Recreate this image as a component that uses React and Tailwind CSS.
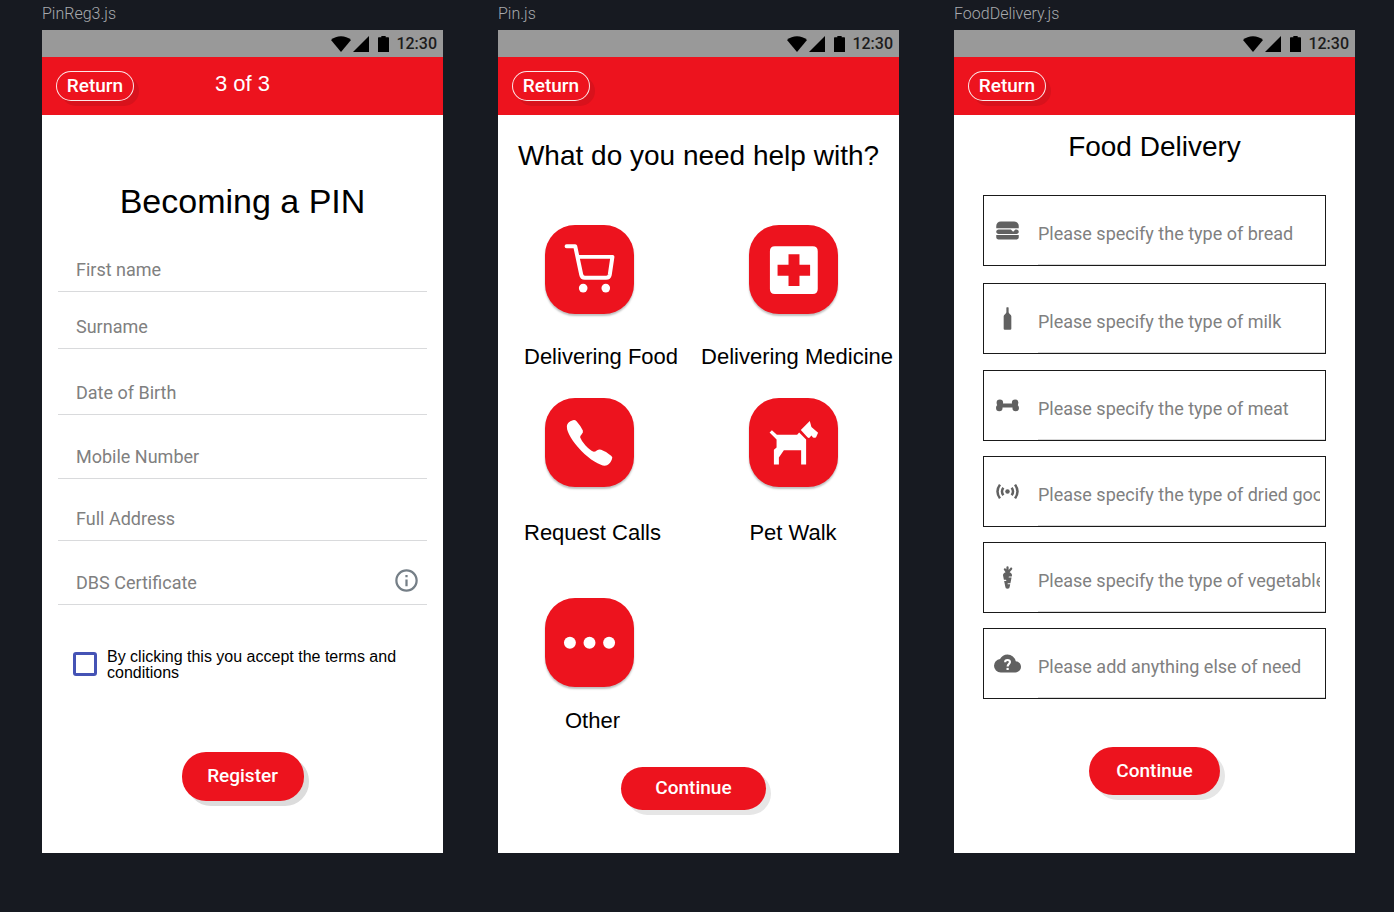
import React from "react";

const roboto = "font-[Roboto,sans-serif]";
const placeholder = "text-[18px] text-[#333] placeholder:text-[#808080] placeholder:opacity-100 outline-none";

function StatusBar() {
  return (
    <div className="flex h-[27px] items-center justify-end bg-[#999] pr-[6px]">
      <svg className="mr-[2px] h-4 w-5" viewBox="0 0 60 48" aria-hidden="true">
        <path d="M0 12Q13 1 30 1T60 12L30 48Z" />
      </svg>
      <svg className="mr-[9px] h-4 w-4" viewBox="0 0 48 48" aria-hidden="true">
        <path d="M48 0V48H0Z" />
      </svg>
      <svg className="mr-[7px] h-4 w-[11px]" viewBox="0 0 33 48" aria-hidden="true">
        <path d="M10 0H23V4H31Q33 4 33 7V48H0V7Q0 4 2 4H10Z" />
      </svg>
      <span className="text-base leading-4 font-medium text-[#1c1c1c]">12:30</span>
    </div>
  );
}

function Phone({ name, progress, children }) {
  return (
    <section className={`min-w-0 ${roboto}`}>
      <h2 className="mb-[6px] text-base leading-5 font-light text-[#a8aaae]">{name}</h2>
      <div className="bg-white">
        <StatusBar />
        <header className="grid h-[58px] grid-cols-3 items-center bg-[#ed131e] px-[14px] text-white">
          <button className="h-[30px] w-[78px] rounded-[15px] border border-white/90 bg-[#ed131e] text-[19px] leading-7 font-medium shadow-[5px_5px_0_#d8121c]">
            Return
          </button>
          <span className="pb-1 text-center font-['Liberation_Sans',sans-serif] text-[22px] leading-8">{progress}</span>
        </header>
        {children}
      </div>
    </section>
  );
}

function ActionButton({ className, children }) {
  return (
    <button className={`block rounded-[24px] bg-[#ed131e] text-center text-[19px] leading-6 font-medium text-white ${className}`}>
      {children}
    </button>
  );
}

const heading = "text-center font-['Liberation_Sans',sans-serif] leading-10 whitespace-nowrap text-black";

const regFields = [
  { id: "first-name", label: "First name", gap: "" },
  { id: "surname", label: "Surname", gap: "mt-[15px]" },
  { id: "birth", label: "Date of Birth", gap: "mt-6" },
  { id: "mobile", label: "Mobile Number", gap: "mt-[22px]" },
  { id: "address", label: "Full Address", gap: "mt-5" },
  { id: "dbs", label: "DBS Certificate", gap: "mt-[22px]", info: true },
];

function Register() {
  return (
    <form className="px-4 pt-[66px] pb-[52px]" onSubmit={(e) => e.preventDefault()}>
      <h1 className={`${heading} mb-[29px] text-[34px]`}>Becoming a PIN</h1>
      {regFields.map((f) => (
        <div key={f.id} className={`flex h-[42px] items-center border-b border-[#d9dadc] ${f.gap}`}>
          <input id={f.id} aria-label={f.label} placeholder={f.label} className={`h-full min-w-0 flex-1 pb-[2px] pl-[18px] ${placeholder}`} />
          {f.info && (
            <button type="button" aria-label="About the DBS certificate" className="mr-[7px] mb-[6px] text-[#757f87]">
              <svg className="h-[27px] w-[27px]" viewBox="0 0 24 24" fill="currentColor">
                <path d="M11 9h2V7h-2m1 13c-4.41 0-8-3.59-8-8s3.59-8 8-8 8 3.59 8 8-3.59 8-8 8m0-18A10 10 0 0 0 2 12a10 10 0 0 0 10 10 10 10 0 0 0 10-10A10 10 0 0 0 12 2m-1 15h2v-6h-2v6z" />
              </svg>
            </button>
          )}
        </div>
      ))}
      <div className="mt-[44px] flex items-start pl-[15px]">
        <input
          id="terms"
          type="checkbox"
          className="mt-[3px] mr-[10px] h-6 w-6 shrink-0 appearance-none rounded-[3px] border-[3px] border-[#4553b5] bg-white checked:bg-[#4553b5]"
        />
        <label htmlFor="terms" className="font-['Liberation_Sans',sans-serif] text-base leading-4 text-black">
          By clicking this you accept the terms and conditions
        </label>
      </div>
      <ActionButton className="mx-auto mt-[71px] h-[49px] w-[122px] pb-[2px] shadow-[5px_5px_0_#dcdcdc]">Register</ActionButton>
    </form>
  );
}

function Tile({ label, children, className = "" }) {
  return (
    <button
      aria-label={label}
      className={`block h-[89px] w-[89px] rounded-[30px] bg-[#ed131e] text-white shadow-[0_2px_2px_rgba(0,0,0,0.25)] ${className}`}
    >
      <svg viewBox="0 0 268 268" className="h-full w-full" fill="currentColor">
        {children}
      </svg>
    </button>
  );
}

const tileLabel = "font-['Liberation_Sans',sans-serif] text-[22px] leading-8 whitespace-nowrap text-black";

function Help() {
  return (
    <div className="pt-[21px] pb-[43px]">
      <h1 className={`${heading} mb-[49px] text-[28px]`}>What do you need help with?</h1>
      <div className="flex justify-between pr-[6px] pl-[26px]">
        <div>
          <Tile label="Delivering Food" className="ml-[21px]">
            <path
              d="M65 64H91L109 149Q111 159 120 159H184Q193 159 195 150L203 96H98"
              fill="none"
              stroke="currentColor"
              strokeWidth="12"
              strokeLinecap="round"
              strokeLinejoin="round"
            />
            <circle cx="115" cy="190" r="13" />
            <circle cx="183" cy="190" r="13" />
          </Tile>
          <p className={`${tileLabel} mt-[27px] mb-[25px]`}>Delivering Food</p>
          <Tile label="Request Calls" className="ml-[21px]">
            <path d="M66 88C65 78 73 70 84 67Q90 65 95 70Q106 82 114 98Q116 104 110 110Q105 115 106 119Q110 130 122 143Q136 158 147 162Q151 162 157 157Q163 154 169 156Q185 161 200 175Q205 179 201 186C196 197 190 203 180 204C166 204 135 186 109 159C83 131 66 104 66 88Z" />
          </Tile>
          <p className={`${tileLabel} mt-[30px] mb-[49px]`}>Request Calls</p>
          <Tile label="Other" className="ml-[21px]">
            <circle cx="75" cy="135" r="18" />
            <circle cx="134" cy="135" r="18" />
            <circle cx="193" cy="135" r="18" />
          </Tile>
          <p className={`${tileLabel} mt-[18px] ml-[41px]`}>Other</p>
        </div>
        <div className="flex flex-col items-center">
          <Tile label="Delivering Medicine">
            <path
              fillRule="evenodd"
              d="M78 64H192Q207 64 207 79V193Q207 208 192 208H78Q63 208 63 193V79Q63 64 78 64ZM119 88V120H86V153H119V184H152V153H184V120H152V88Z"
            />
          </Tile>
          <p className={`${tileLabel} mt-[27px] mb-[25px] pl-2`}>Delivering Medicine</p>
          <Tile label="Pet Walk">
            <path d="M62 104L69 97L84 111H145L151 104L172 125V200H157V157H105L90 179V200H75V156L83 149V125Z" />
            <path d="M156 96L183 69L188 87L208 105L202 118Q197 122 192 118L188 113L182 120Q179 121 176 118Z" />
          </Tile>
          <p className={`${tileLabel} mt-[30px]`}>Pet Walk</p>
        </div>
      </div>
      <div className="flex justify-center pr-[10px]">
        <ActionButton className="mt-[30px] h-[43px] w-[145px] pb-[2px] shadow-[5px_5px_0_#e6e6e6]">Continue</ActionButton>
      </div>
    </div>
  );
}

const foods = [
  {
    id: "bread",
    text: "Please specify the type of bread",
    gap: "",
    icon: (
      <path d="M2 16H22V18C22 19.11 21.11 20 20 20H4C2.89 20 2 19.11 2 18V16M6 4H18C20.22 4 22 5.78 22 8V10H2V8C2 5.78 3.78 4 6 4M4 11H15L17 13L19 11H20C21.11 11 22 11.89 22 13C22 14.11 21.11 15 20 15H4C2.89 15 2 14.11 2 13C2 11.89 2.89 11 4 11Z" />
    ),
  },
  {
    id: "milk",
    text: "Please specify the type of milk",
    gap: "mt-[17px]",
    icon: <path d="M11 2.5Q11 2 11.5 2H12.5Q13 2 13 2.5V6.5Q13.200 7.500 14.200 8.200Q15.400 9 15.400 10V21Q15.400 22 14.400 22H9.600Q8.600 22 8.600 21V10Q8.600 9 9.800 8.200Q10.800 7.500 11 6.500Z" />,
  },
  {
    id: "meat",
    text: "Please specify the type of meat",
    gap: "mt-4",
    icon: (
      <>
        <circle cx="5.200" cy="9.500" r="2.900" />
        <circle cx="4.700" cy="14.200" r="2.900" />
        <circle cx="18.800" cy="9.500" r="2.900" />
        <circle cx="19.300" cy="14.200" r="2.900" />
        <path d="M3 8.500L7.500 10.200H16.500L21 8.500V15.500L16.500 13.800H7.500L3 15.500Z" />
      </>
    ),
  },
  {
    id: "dried",
    text: "Please specify the type of dried goods",
    gap: "mt-[15px]",
    icon: (
      <>
        <circle cx="12" cy="12" r="2" />
        <path
          d="M5.300 5.900Q.900 12 5.300 18.100M18.700 5.900Q23.100 12 18.700 18.100M8.300 8.700Q5.900 12 8.300 15.300M15.700 8.700Q18.100 12 15.700 15.300"
          fill="none"
          stroke="currentColor"
          strokeWidth="2.200"
        />
      </>
    ),
  },
  {
    id: "vegetables",
    text: "Please specify the type of vegetables",
    gap: "mt-[15px]",
    icon: (
      <path d="M16 10L15.8 11H13.5A.5.5 0 0 0 13 11.5A.5.5 0 0 0 13.5 12H15.6L14.6 17H12.5A.5.5 0 0 0 12 17.500A.5.5 0 0 0 12.500 18H14.400L14 20A2 2 0 0 1 12 22A2 2 0 0 1 10 20L9 15H10.500A.5.5 0 0 0 11 14.500A.5.5 0 0 0 10.500 14H8.800L8 10C8 8.800 8.930 7.770 10.290 7.290L8.900 5.280C8.590 4.820 8.700 4.200 9.160 3.890C9.610 3.570 10.230 3.690 10.550 4.140L11 4.800V3A1 1 0 0 1 12 2A1 1 0 0 1 13 3V5.280L14.500 3.540C14.830 3.120 15.470 3.070 15.890 3.430C16.310 3.780 16.360 4.410 16 4.840L13.870 7.350C15.140 7.850 16 8.850 16 10Z" />
    ),
  },
  {
    id: "else",
    text: "Please add anything else of need",
    gap: "mt-[15px]",
    icon: (
      <>
        <path d="M19.350 10.040A7.490 7.490 0 0 0 12 4C9.110 4 6.600 5.640 5.350 8.040A5.994 5.994 0 0 0 0 14a6 6 0 0 0 6 6h13a5 5 0 0 0 5-5c0-2.640-2.050-4.780-4.650-4.960z" />
        <path d="M9.900 10.800Q9.900 8.900 12 8.900T14.200 10.700C14.200 12.400 12.100 12.300 12.100 14.700" fill="none" stroke="#fff" strokeWidth="1.900" />
        <path d="M11.100 15.900H13.100V17.800H11.100Z" fill="#fff" />
      </>
    ),
  },
];

function Food() {
  return (
    <form className="px-[29px] pt-3 pb-[58px]" onSubmit={(e) => e.preventDefault()}>
      <h1 className={`${heading} mb-7 text-[28px]`}>Food Delivery</h1>
      {foods.map((f) => (
        <div key={f.id} className={`flex h-[71px] items-center border border-[#1a1a1a] pl-[10px] ${f.gap}`}>
          <svg className="mr-[17px] h-[27px] w-[27px] shrink-0 text-[#616161]" viewBox="0 0 24 24" fill="currentColor" aria-hidden="true">
            {f.icon}
          </svg>
          <input
            id={f.id}
            aria-label={f.text}
            placeholder={f.text}
            className={`h-full min-w-0 flex-1 border-b border-[#d9d9d9] pt-[6px] pr-[5px] ${placeholder}`}
          />
        </div>
      ))}
      <ActionButton className="mx-auto mt-12 h-12 w-[131px] shadow-[5px_5px_0_#e6e6e6]">Continue</ActionButton>
    </form>
  );
}

export default function App() {
  return (
    <main className="grid min-h-screen grid-cols-3 content-start gap-[55px] bg-[#171a21] pt-1 pr-[39px] pb-[59px] pl-[42px]">
      <Phone name="PinReg3.js" progress="3 of 3">
        <Register />
      </Phone>
      <Phone name="Pin.js">
        <Help />
      </Phone>
      <Phone name="FoodDelivery.js">
        <Food />
      </Phone>
    </main>
  );
}
